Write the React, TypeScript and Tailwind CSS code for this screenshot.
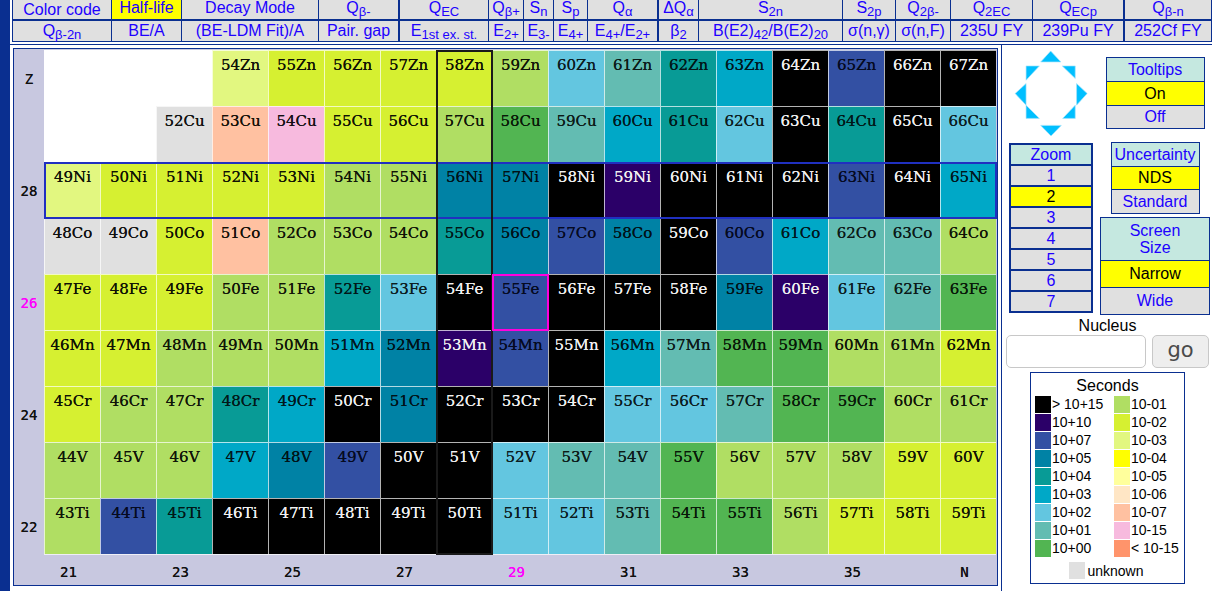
import React from "react";

const C: Record<string, string> = {
  k: "bg-[#000000] text-[#f0f0f0]",
  p: "bg-[#2b0068] text-[#f0f0f0]",
  "7": "bg-[#3350a3] text-[#050a20]",
  "5": "bg-[#0082a5] text-[#011218]",
  "4": "bg-[#089b96] text-[#011818]",
  "3": "bg-[#00a8c7] text-[#01181e]",
  "2": "bg-[#63c6e0] text-[#0c1c20]",
  "1": "bg-[#63bcb2] text-[#0c1a18]",
  "0": "bg-[#52b552] text-[#081808]",
  a: "bg-[#b0de63] text-[#101408]",
  b: "bg-[#d6f031] text-[#101204]",
  c: "bg-[#e2f780] text-[#101208]",
  u: "bg-[#e0e0e0] text-[#101010]",
  g: "bg-[#ffc1a1] text-[#141008]",
  h: "bg-[#f7bade] text-[#141014]",
};

type Row = { el: string; start: number; idx: number; codes: string };
const rows: Row[] = [
  { el: "Zn", start: 54, idx: 3, codes: "cbbbba2143k7kk" },
  { el: "Cu", start: 52, idx: 2, codes: "ughbba01342k4k2" },
  { el: "Ni", start: 49, idx: 0, codes: "cbbbbaa55kpkkk7k3" },
  { el: "Co", start: 48, idx: 0, codes: "uubgaaa4575k7311a" },
  { el: "Fe", start: 47, idx: 0, codes: "bbbaa42k7kkk5p210" },
  { el: "Mn", start: 46, idx: 0, codes: "bbaaa35p7k3100aab" },
  { el: "Cr", start: 45, idx: 0, codes: "baa43k5kkk22100aa" },
  { el: "V", start: 44, idx: 0, codes: "aaa357kk2110aaabb" },
  { el: "Ti", start: 43, idx: 0, codes: "a74kkkkk22100abbb" },
];

const zLabels = [
  { t: "Z", cls: "text-[#111]" },
  { t: "", cls: "" },
  { t: "28", cls: "text-[#111]" },
  { t: "", cls: "" },
  { t: "26", cls: "text-[#ff00ff]" },
  { t: "", cls: "" },
  { t: "24", cls: "text-[#111]" },
  { t: "", cls: "" },
  { t: "22", cls: "text-[#111]" },
];
const nLabels = ["21", "", "23", "", "25", "", "27", "", "29", "", "31", "", "33", "", "35", "", "N"];

const S = ({ children }: { children: React.ReactNode }) => (
  <sub className="text-[13px]">{children}</sub>
);

type H = { c: React.ReactNode; cls?: string };
const row1: H[] = [
  { c: "Color code", cls: "bg-[#c5e8e0] pt-[1px]" },
  { c: "Half-life", cls: "bg-[#ffff00] pb-[3px]" },
  { c: "Decay Mode", cls: "pb-[3px]" },
  { c: <>Q<S>β-</S></>, cls: "pb-[3px] border-r-2" },
  { c: <>Q<S>EC</S></>, cls: "pb-[3px]" },
  { c: <>Q<S>β+</S></>, cls: "pb-[3px]" },
  { c: <>S<S>n</S></>, cls: "pb-[3px]" },
  { c: <>S<S>p</S></>, cls: "pb-[3px]" },
  { c: <>Q<S>α</S></>, cls: "pb-[3px] border-r-2" },
  { c: <>ΔQ<S>α</S></>, cls: "pb-[3px]" },
  { c: <>S<S>2n</S></>, cls: "pb-[3px]" },
  { c: <>S<S>2p</S></>, cls: "pb-[3px]" },
  { c: <>Q<S>2β-</S></>, cls: "pb-[3px]" },
  { c: <>Q<S>2EC</S></>, cls: "pb-[3px]" },
  { c: <>Q<S>ECp</S></>, cls: "pb-[3px] border-r-2" },
  { c: <>Q<S>β-n</S></>, cls: "pb-[3px]" },
];
const row2: H[] = [
  { c: <>Q<S>β-2n</S></> },
  { c: "BE/A" },
  { c: "(BE-LDM Fit)/A" },
  { c: "Pair. gap", cls: "border-r-2" },
  { c: <>E<S>1st ex. st.</S></> },
  { c: <>E<S>2+</S></> },
  { c: <>E<S>3-</S></> },
  { c: <>E<S>4+</S></> },
  { c: <>E<S>4+</S>/E<S>2+</S></>, cls: "border-r-2" },
  { c: <>β<S>2</S></> },
  { c: <>B(E2)<S>42</S>/B(E2)<S>20</S></> },
  { c: "σ(n,γ)" },
  { c: "σ(n,F)" },
  { c: "235U FY" },
  { c: "239Pu FY", cls: "border-r-2" },
  { c: "252Cf FY" },
];

const legendL: [string, string][] = [
  ["bg-[#000000]", "> 10+15"],
  ["bg-[#2b0068]", "10+10"],
  ["bg-[#3350a3]", "10+07"],
  ["bg-[#0082a5]", "10+05"],
  ["bg-[#089b96]", "10+04"],
  ["bg-[#00a8c7]", "10+03"],
  ["bg-[#63c6e0]", "10+02"],
  ["bg-[#63bcb2]", "10+01"],
  ["bg-[#52b552]", "10+00"],
];
const legendR: [string, string][] = [
  ["bg-[#b0de63]", "10-01"],
  ["bg-[#d6f031]", "10-02"],
  ["bg-[#e2f780]", "10-03"],
  ["bg-[#ffff00]", "10-04"],
  ["bg-[#ffff9c]", "10-05"],
  ["bg-[#ffe6c5]", "10-06"],
  ["bg-[#ffc1a1]", "10-07"],
  ["bg-[#f7bade]", "10-15"],
  ["bg-[#ff946b]", "< 10-15"],
];

function Arrows() {
  const tris = [
    "92,45 122,12 153,45",
    "48,57 88,57 48,100",
    "157,57 196,57 196,95",
    "48,110 15,140 48,175",
    "200,110 232,140 200,175",
    "48,175 88,215 48,215",
    "196,175 196,215 158,215",
    "92,236 154,236 123,268",
  ];
  return (
    <svg width="80" height="93" viewBox="0 0 240 280" className="-ml-[2px] block">
      {tris.map((p) => (
        <polygon key={p} points={p} fill="#00bfff" stroke="#a8e4fb" strokeWidth="2" />
      ))}
    </svg>
  );
}

const BLUE = "border-[#0a2f90]";

export default function App() {
  return (
    <div className="flex h-[591px] w-[1212px] overflow-hidden bg-white font-['Liberation_Sans',Arial,sans-serif]">
      <div className="w-[10px] shrink-0 bg-[#0a2f90]" />
      <div className="flex min-w-0 flex-1 flex-col">
        {/* header */}
        <div className="h-[44px] shrink-0 pl-[2px]">
          <div className="w-[1200px] border-l border-[#0a2f90] text-[16px] text-[#2000ff]">
            {[row1, row2].map((r, ri) => (
              <div
                key={ri}
                className={
                  ri === 0
                    ? "grid h-[21px] grid-cols-[99px_70px_137px_81px_89px_35px_30px_34px_71px_40px_144px_53px_55px_82px_92px_87px] border-b-2 border-[#0a2f90]"
                    : "grid h-[21px] grid-cols-[99px_70px_137px_81px_89px_35px_30px_34px_71px_40px_144px_53px_55px_82px_92px_87px] border-b border-[#0a2f90]"
                }
              >
                {r.map((h, i) => (
                  <div
                    key={i}
                    className={`flex items-center justify-center whitespace-nowrap border-r ${BLUE} bg-[#e0e0e0] leading-none ${h.cls ?? ""}`}
                  >
                    <span>{h.c}</span>
                  </div>
                ))}
              </div>
            ))}
          </div>
        </div>

        <div className={`flex min-h-0 flex-1 border-t ${BLUE}`}>
          {/* chart */}
          <div className={`w-[992px] shrink-0 border-r ${BLUE} pl-[3px] pt-[3px]`}>
            <div className={`w-[985px] border ${BLUE} bg-[#c8c8e0] pt-px font-['DejaVu_Sans_Mono',monospace]`}>
              <div className="flex">
                <div className="w-[30px] shrink-0">
                  {zLabels.map((z, i) => (
                    <div key={i} className={`flex h-[56px] items-center justify-center pt-[3px] text-[14px] [text-shadow:0_0_0.5px_currentColor] ${z.cls}`}>
                      {z.t}
                    </div>
                  ))}
                </div>
                <div className="relative">
                  <div className="grid grid-cols-[repeat(17,56px)] grid-rows-[repeat(9,56px)] border-b border-white/70">
                    {rows.map((r) =>
                      Array.from({ length: 17 }).map((_, i) => {
                        const j = i - r.idx;
                        const code = j >= 0 ? r.codes[j] : undefined;
                        if (!code)
                          return <div key={r.el + i} className="bg-white" />;
                        return (
                          <div
                            key={r.el + i}
                            className={`border-l border-t border-white/70 pt-[5px] text-center font-['DejaVu_Serif',serif] text-[15px] leading-[18px] [text-shadow:0_0_0.5px_currentColor] ${C[code]}`}
                          >
                            {r.start + j}
                            {r.el}
                          </div>
                        );
                      })
                    )}
                  </div>
                  <div className="pointer-events-none absolute left-0 top-[112px] h-[57px] w-[953px] border-2 border-[#2030c0]" />
                  <div className="pointer-events-none absolute left-[392px] top-0 h-[505px] w-[57px] border-2 border-[#1a1a1a]" />
                  <div className="pointer-events-none absolute left-[448px] top-[224px] h-[57px] w-[57px] border-2 border-[#ff00dd]" />
                </div>
              </div>
              <div className="flex h-[30px] pl-[30px]">
                {nLabels.map((n, i) => (
                  <div
                    key={i}
                    className={
                      n === "29"
                        ? "w-[56px] pr-[7px] text-center text-[14px] leading-[34px] text-[#ff00ff] [text-shadow:0_0_0.5px_currentColor]"
                        : "w-[56px] pr-[7px] text-center text-[14px] leading-[34px] text-[#111] [text-shadow:0_0_0.5px_currentColor]"
                    }
                  >
                    {n}
                  </div>
                ))}
              </div>
            </div>
          </div>

          {/* side */}
          <div className="flex min-w-0 flex-1 flex-col text-[16px] leading-none">
            <div className="flex">
              <div className="flex w-[98px] flex-col items-center">
                <div className="mt-[2px]"><Arrows /></div>
                <div className={`mt-[3px] w-[84px] border-[2px] ${BLUE} bg-[#0a2f90] text-[#2000ff]`}>
                  <div className="flex h-[19px] items-center justify-center bg-[#c5e8e0]">Zoom</div>
                  {["1", "2", "3", "4", "5", "6", "7"].map((z) => (
                    <div
                      key={z}
                      className={
                        z === "2"
                          ? "mt-[2px] flex h-[19px] items-center justify-center bg-[#ffff00] text-black"
                          : "mt-[2px] flex h-[19px] items-center justify-center bg-[#e0e0e0]"
                      }
                    >
                      {z}
                    </div>
                  ))}
                </div>
              </div>
              <div className="flex w-[110px] flex-col items-center text-[#2000ff]">
                <div className={`mt-[12px] w-[99px] border ${BLUE} bg-[#0a2f90]`}>
                  <div className="flex h-[23px] items-center justify-center bg-[#c5e8e0]">Tooltips</div>
                  <div className="mt-px flex h-[23px] items-center justify-center bg-[#ffff00] text-black">On</div>
                  <div className="mt-px flex h-[22px] items-center justify-center bg-[#e0e0e0]">Off</div>
                </div>
                <div className={`mt-[13px] w-[89px] border ${BLUE} bg-[#0a2f90]`}>
                  <div className="flex h-[23px] items-center justify-center bg-[#c5e8e0]">Uncertainty</div>
                  <div className="mt-px flex h-[22px] items-center justify-center bg-[#ffff00] text-black">NDS</div>
                  <div className="mt-px flex h-[23px] items-center justify-center bg-[#e0e0e0]">Standard</div>
                </div>
                <div className={`mt-[3px] w-[110px] border ${BLUE} bg-[#0a2f90]`}>
                  <div className="flex h-[42px] items-center justify-center bg-[#c5e8e0] text-center leading-[17px]">
                    Screen<br />Size
                  </div>
                  <div className="mt-px flex h-[26px] items-center justify-center bg-[#ffff00] text-black">Narrow</div>
                  <div className="mt-px flex h-[26px] items-center justify-center bg-[#e0e0e0]">Wide</div>
                </div>
              </div>
            </div>
            <div className="mt-[3px] pl-[4px]">
              <div className="w-[203px] text-center text-black">Nucleus</div>
              <div className="mt-[1px] flex gap-[6px]">
                <div className="h-[33px] w-[140px] rounded-[5px] border border-[#c8c8c8] bg-white" />
                <div className="flex h-[33px] w-[57px] items-center justify-center rounded-[5px] border border-[#c8c8c8] bg-[#eeeeee] pb-[2px] font-['DejaVu_Sans',sans-serif] text-[21px] text-[#4a4a4a]">
                  go
                </div>
              </div>
            </div>
            <div className={`ml-[28px] mt-[4px] h-[212px] w-[155px] border ${BLUE} px-[4px] text-[14px] text-black`}>
              <div className="pt-[5px] text-center text-[16px]">Seconds</div>
              <div className="mt-[1px] flex">
                {[legendL, legendR].map((col, ci) => (
                  <div key={ci} className={ci === 0 ? "w-[79px]" : ""}>
                    {col.map(([bg, t]) => (
                      <div key={t} className="flex h-[18px] items-center gap-px">
                        <div className={`h-[17px] w-[16px] shrink-0 ${bg}`} />
                        <span className="whitespace-nowrap">{t}</span>
                      </div>
                    ))}
                  </div>
                ))}
              </div>
              <div className="mt-[5px] flex items-center justify-center gap-[2px] pr-[2px]">
                <div className="h-[17px] w-[16px] bg-[#e0e0e0]" />
                <span>unknown</span>
              </div>
            </div>
          </div>
        </div>
      </div>
    </div>
  );
}
